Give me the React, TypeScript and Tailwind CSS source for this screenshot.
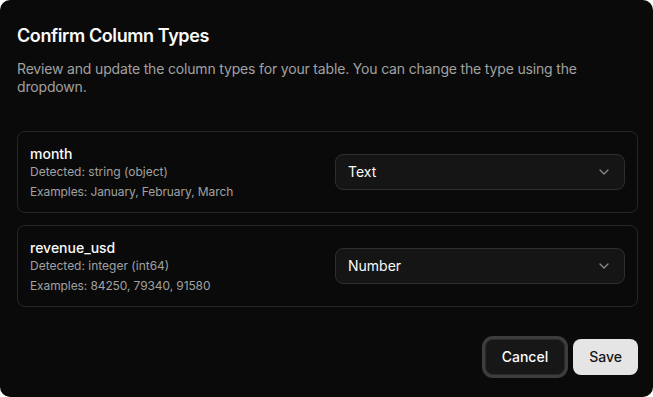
import React from "react";

function Chevron() {
  return (
    <svg width="16" height="16" viewBox="0 0 24 24" fill="none" stroke="currentColor" strokeWidth="2" strokeLinecap="round" strokeLinejoin="round" className="opacity-50">
      <path d="m6 9 6 6 6-6" />
    </svg>
  );
}

function Row({ name, detected, examples, value }: { name: string; detected: string; examples: string; value: string }) {
  return (
    <div className="flex items-center justify-between rounded-lg border border-[#262626] p-3">
      <div className="flex flex-col">
        <div className="text-sm leading-5 font-medium text-[#fafafa]">{name}</div>
        <div className="text-xs leading-4 text-[#a1a1a1]">{detected}</div>
        <div className="mt-1 text-xs leading-4 tracking-[-0.1px] text-[#a1a1a1]">{examples}</div>
      </div>
      <div className="flex h-9 w-[290px] items-center justify-between rounded-lg border border-[#2e2e2e] bg-[#151515] px-3 text-sm text-[#fafafa]">
        <span>{value}</span>
        <Chevron />
      </div>
    </div>
  );
}

export default function App() {
  return (
    <div className="min-h-screen bg-white" style={{ fontFamily: "Inter, 'Noto Sans', sans-serif" }}>
      <div className="flex h-[397px] w-[653px] flex-col rounded-[10px] bg-[#0a0a0a] pl-[17px] pr-[15px] pt-[22px] pb-[22px]">
        <h2 className="text-lg leading-7 font-semibold tracking-[-0.4px] text-[#fafafa]">Confirm Column Types</h2>
        <p className="mt-[10px] text-sm leading-[18px] tracking-[-0.17px] text-[#a1a1a1]">
          Review and update the column types for your table. You can change the type using the dropdown.
        </p>
        <div className="mt-[35px] flex flex-col gap-3">
          <Row name="month" detected="Detected: string (object)" examples="Examples: January, February, March" value="Text" />
          <Row name="revenue_usd" detected="Detected: integer (int64)" examples="Examples: 84250, 79340, 91580" value="Number" />
        </div>
        <div className="mt-auto flex justify-end gap-2">
          <button className="h-9 rounded-lg border border-[#2a2a2a] bg-[#171717] px-4 text-sm font-medium text-[#fafafa] ring-[3px] ring-[#3d3d3d]">
            Cancel
          </button>
          <button className="h-9 rounded-lg bg-[#e5e5e5] px-4 text-sm font-medium text-[#171717]">Save</button>
        </div>
      </div>
    </div>
  );
}
